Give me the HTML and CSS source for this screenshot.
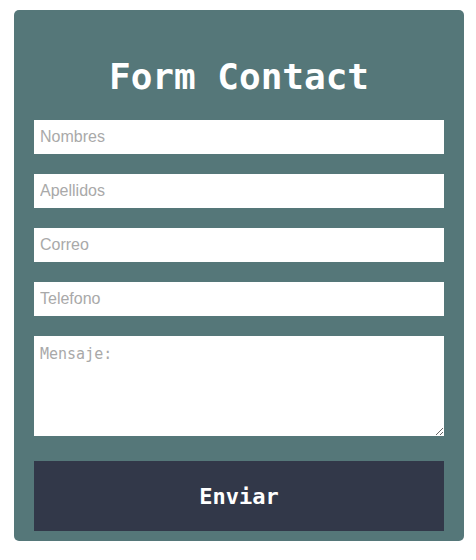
FILE: index.html
```html
<!DOCTYPE html>
<html lang="es">
<head>
<meta charset="utf-8">
<title>Form Contact</title>
<link rel="stylesheet" href="styles.css">
</head>
<body>
<form class="contact">
  <h1 class="contact__title">Form Contact</h1>
  <input class="contact__field" type="text" placeholder="Nombres">
  <input class="contact__field" type="text" placeholder="Apellidos">
  <input class="contact__field" type="text" placeholder="Correo">
  <input class="contact__field" type="text" placeholder="Telefono">
  <textarea class="contact__message" placeholder="Mensaje:"></textarea>
  <button class="contact__send" type="button">Enviar</button>
</form>
</body>
</html>
```
FILE: styles.css
```css
html, body {
  margin: 0;
  padding: 0;
  background: #ffffff;
}

.contact {
  box-sizing: border-box;
  width: 450px;
  margin: 10px 0 0 14px;
  padding: 0 20px 10px;
  background: #557779;
  border-radius: 5px;
  display: flex;
  flex-direction: column;
}

.contact__title {
  margin: 46px 0 22px;
  font-family: "DejaVu Sans Mono", monospace;
  font-weight: bold;
  font-size: 36px;
  line-height: 42px;
  color: #ffffff;
  text-align: center;
}

.contact__field {
  box-sizing: border-box;
  width: 410px;
  height: 34px;
  margin: 0 0 20px;
  padding: 0 6px;
  border: none;
  outline: none;
  background: #ffffff;
  font-family: "Liberation Sans", Arial, sans-serif;
  font-size: 16px;
  color: #333333;
}

.contact__field::placeholder {
  color: #a9a9a9;
}

.contact__message {
  box-sizing: border-box;
  width: 410px;
  height: 100px;
  margin: 0 0 25px;
  padding: 9px 6px;
  border: none;
  outline: none;
  background: #ffffff;
  font-family: "DejaVu Sans Mono", monospace;
  font-size: 15px;
  color: #333333;
}

.contact__message::placeholder {
  color: #a9a9a9;
}

.contact__send {
  width: 410px;
  height: 70px;
  margin: 0;
  padding: 0;
  border: none;
  background: #323849;
  color: #ffffff;
  font-family: "DejaVu Sans Mono", monospace;
  font-weight: bold;
  font-size: 22px;
  cursor: pointer;
}
```
